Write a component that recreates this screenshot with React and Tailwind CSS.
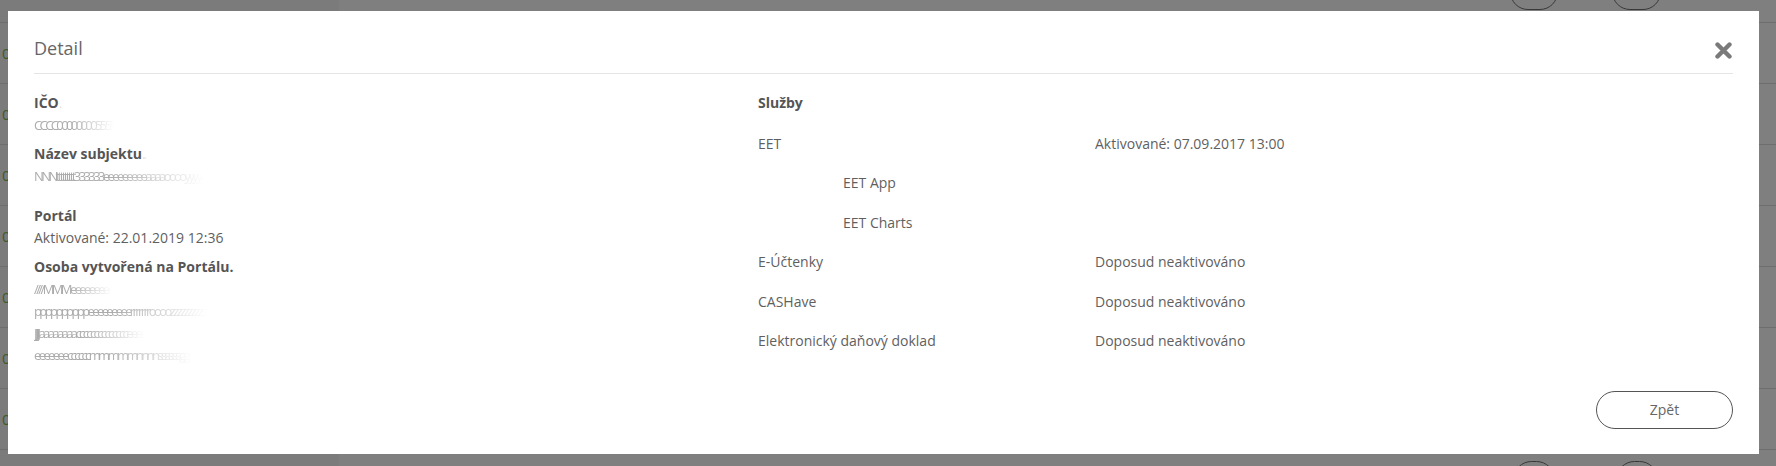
import React from 'react';

const FONT = { fontFamily: '"Open Sans", "Noto Sans", sans-serif' };

const rows = [0, 1, 2, 3, 4, 5, 6, 7];

const services = [
  { name: 'EET', status: 'Aktivované: 07.09.2017 13:00' },
  { name: 'EET App', sub: true },
  { name: 'EET Charts', sub: true },
  { name: 'E-Účtenky', status: 'Doposud neaktivováno' },
  { name: 'CASHave', status: 'Doposud neaktivováno' },
  { name: 'Elektronický daňový doklad', status: 'Doposud neaktivováno' },
];

// redacted values in the screenshot look like smeared, overlapping glyphs
function Smear({ text }) {
  return (
    <div className="h-[22px]">
      <span className="inline-block whitespace-nowrap tracking-[-0.2em] text-[13px] leading-[22px] text-[#acacac] [mask-image:linear-gradient(to_right,black_45%,transparent)]">
        {text}
      </span>
    </div>
  );
}

function Label({ children, tail, className = '' }) {
  return (
    <div className={`flex items-center font-bold text-[#555] ${className}`}>
      <span>{children}</span>
      {tail && (
        <span className="whitespace-nowrap tracking-[-0.2em] font-normal text-[#dcdcdc] [mask-image:linear-gradient(to_right,black_20%,transparent)]">
          {tail}
        </span>
      )}
    </div>
  );
}

function CloseIcon() {
  return (
    <svg width="19" height="17" viewBox="0 0 19 17" className="mt-[7px] shrink-0">
      <path d="M3.5 2.5 L15.5 14.5 M15.5 2.5 L3.5 14.5" stroke="#7a7a7a" strokeWidth="4.4" strokeLinecap="round" />
    </svg>
  );
}

export default function App() {
  return (
    <div className="relative h-[466px] w-[1776px] overflow-hidden bg-white" style={FONT}>
      {/* table behind the dialog */}
      <div className="flex flex-col">
        <div className="flex h-[22px]">
          <div className="w-[339px] bg-[#f6f6f6]" />
          <div className="relative flex-1">
            <span className="absolute left-[1171px] top-[-26px] h-[36px] w-[48px] rounded-full border border-[#707070]" />
            <span className="absolute left-[1273px] top-[-26px] h-[36px] w-[49px] rounded-full border border-[#707070]" />
          </div>
        </div>
        {rows.map((r) => (
          <div key={r} className="flex h-[61px] border-t border-[#dcdcdc]">
            <div className="flex w-[339px] items-center bg-[#f6f6f6] pl-[2px] text-[15px] text-[#7bb94c]">
              {r < 7 ? '0' : ''}
            </div>
            <div className="relative flex-1">
              {r === 7 && (
                <>
                  <span className="absolute left-[1174px] top-[11px] h-[37px] w-[42px] rounded-full border border-[#707070]" />
                  <span className="absolute left-[1277px] top-[11px] h-[37px] w-[42px] rounded-full border border-[#707070]" />
                </>
              )}
            </div>
          </div>
        ))}
      </div>

      {/* overlay + dialog */}
      <div className="absolute inset-0 bg-black/50 pl-[8px] pt-[11px]">
        <div className="flex h-[443px] w-[1751px] flex-col bg-white px-[26px] text-[14px] leading-[22px] text-[#5f5f5f]">
          <div className="flex items-start justify-between border-b border-[#e5e5e5] pt-[24px] pb-[11px]">
            <h4 className="text-[18px] leading-[27px] text-[#666]">Detail</h4>
            <CloseIcon />
          </div>

          <div className="flex pt-[18px]">
            <div className="w-[724px] shrink-0">
              <Label tail="....">IČO</Label>
              <Smear text="CCCC000000005555" />
              <Label tail="......" className="mt-[7px]">Název subjektu</Label>
              <Smear text="NNNttttttttt333333eeeeeeeeeaaaaooooyyyyy" />
              <Label className="mt-[18px]">Portál</Label>
              <div>Aktivované: 22.01.2019 12:36</div>
              <Label className="mt-[7px]">Osoba vytvořená na Portálu.</Label>
              <Smear text="////MMMeeeeeeeee" />
              <Smear text="ppppppppppeeeeeeeeerrrrrrroooozzzzzzzzzss" />
              <Smear text="JJJJJaaaaaaaacccccccccccccceeee" />
              <Smear text="eeeeeeeccccccmmmmmnnnnssssssggg" />
            </div>

            <div className="flex-1">
              <div className="font-bold text-[#555]">Služby</div>
              <div className="mt-[10px]">
                {services.map((s) => (
                  <div key={s.name} className="flex h-[39.5px] items-center">
                    <div className={`w-[337px] shrink-0 ${s.sub ? 'pl-[85px]' : ''}`}>{s.name}</div>
                    {s.status && <div>{s.status}</div>}
                  </div>
                ))}
              </div>
            </div>
          </div>

          <div className="mt-auto flex justify-end pb-[25px]">
            <button className="h-[38px] w-[137px] rounded-full border border-[#555] text-[14px] text-[#666]">
              Zpět
            </button>
          </div>
        </div>
      </div>
    </div>
  );
}
